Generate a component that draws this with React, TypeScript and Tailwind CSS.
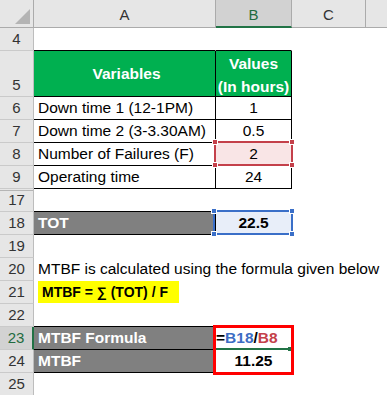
import React from 'react';

type RowProps = {
  num: string;
  h?: string;
  numCls?: string;
  children?: React.ReactNode;
};

// row header + cells
const Row = ({ num, h = 'h-[23px]', numCls = 'items-center bg-[#e6e6e6] text-[#333] border-r-[#bdbdbd]', children }: RowProps) => (
  <div className={`flex ${h}`}>
    <div className={`w-[34px] shrink-0 flex justify-center leading-[22px] text-[15px] border-r border-b border-b-[#cacaca] ${numCls}`}>
      {num}
    </div>
    {children}
  </div>
);

const colA = 'w-[182px] shrink-0 flex items-center pl-[4px] leading-[22px] border-r border-b whitespace-nowrap';
const colB = 'w-[76px] shrink-0 flex items-center justify-center leading-[22px] border-r border-b';
const none = 'border-transparent';
const line = 'border-black';

const Handles = ({ color }: { color: string }) => (
  <>
    <span className={`absolute -left-[4px] -top-[4px] w-[6px] h-[6px] border border-white ${color}`} />
    <span className={`absolute -right-[4px] -top-[4px] w-[6px] h-[6px] border border-white ${color}`} />
    <span className={`absolute -left-[4px] -bottom-[4px] w-[6px] h-[6px] border border-white ${color}`} />
    <span className={`absolute -right-[4px] -bottom-[4px] w-[6px] h-[6px] border border-white ${color}`} />
  </>
);

const App = () => {
  return (
    <div className="w-[387px] h-[395px] overflow-hidden bg-white text-black text-[15.5px] font-['Liberation_Sans',Arial,sans-serif]">
      {/* column headers */}
      <div className="flex h-[28px] text-[#333] text-[15px]">
        <div className="w-[34px] shrink-0 bg-[#e6e6e6] border-r border-b border-[#ababab]">
          <svg width="33" height="27" viewBox="0 0 33 27">
            <polygon points="30,9 30,24 15,24" fill="#b4b4b4" />
          </svg>
        </div>
        <div className="w-[182px] shrink-0 flex items-center justify-center pt-[4px] bg-[#e6e6e6] border-r border-b border-[#ababab]">A</div>
        <div className="w-[76px] shrink-0 flex items-center justify-center pt-[4px] bg-[#d2d2d2] text-[#1f6b40] border-r border-r-[#ababab] border-b-2 border-b-[#217346]">B</div>
        <div className="w-[74px] shrink-0 flex items-center justify-center pt-[4px] bg-[#e6e6e6] border-r border-b border-[#ababab]">C</div>
        <div className="flex-1 bg-[#e6e6e6] border-b border-[#ababab]" />
      </div>

      <Row num="4">
        <div className={`${colA} border-r-transparent border-b-black`} />
        <div className={`${colB} border-r-transparent border-b-black`} />
      </Row>

      <Row num="5" h="h-[46px]" numCls="items-end bg-[#e6e6e6] text-[#333] border-r-[#bdbdbd]">
        <div className={`${colA} ${line} justify-center pl-0 bg-[#00b050] text-white font-bold`}>Variables</div>
        <div className={`${colB} ${line} pt-[2px] bg-[#00b050] text-white font-bold text-center leading-[23px]`}>
          Values<br />(In hours)
        </div>
      </Row>

      <Row num="6">
        <div className={`${colA} ${line}`}>Down time 1 (12-1PM)</div>
        <div className={`${colB} ${line}`}>1</div>
      </Row>
      <Row num="7">
        <div className={`${colA} ${line}`}>Down time 2 (3-3.30AM)</div>
        <div className={`${colB} ${line}`}>0.5</div>
      </Row>
      <Row num="8">
        <div className={`${colA} ${line}`}>Number of Failures (F)</div>
        <div className={`${colB} ${line} relative bg-[#f9e5e6]`}>
          2
          <div className="absolute -left-[2px] -top-[2px] w-[79px] h-[25px] border-2 border-[#c4404a] pointer-events-none">
            <Handles color="bg-[#c4404a]" />
          </div>
        </div>
      </Row>
      <Row num="9">
        <div className={`${colA} ${line}`}>Operating time</div>
        <div className={`${colB} ${line}`}>24</div>
      </Row>

      <Row num="17" numCls="items-center bg-[#e6e6e6] text-[#333] border-r-[#bdbdbd] shadow-[inset_0_1px_0_#e6e6e6,inset_0_2px_0_#b5b5b5]">
        <div className={`${colA} border-r-transparent border-b-black`} />
        <div className={`${colB} border-r-transparent border-b-black`} />
      </Row>
      <Row num="18">
        <div className={`${colA} ${line} bg-[#808080] text-white font-bold`}>TOT</div>
        <div className={`${colB} ${line} relative bg-[#e8eef9] font-bold`}>
          22.5
          <div className="absolute -left-[3px] -top-[2px] w-[80px] h-[25px] border-2 border-[#3a6fc8] pointer-events-none">
            <Handles color="bg-[#3a6fc8]" />
          </div>
        </div>
      </Row>
      <Row num="19" />
      <Row num="20">
        <div className={`${colA} ${none}`}>MTBF is calculated using the formula given below</div>
      </Row>
      <Row num="21">
        <div className={`${colA} ${none} pl-0`}>
          <div className="w-[141px] h-full flex items-center pl-[4px] bg-[#ffff00] font-bold text-[14px]">MTBF = ∑ (TOT) / F</div>
        </div>
      </Row>
      <Row num="22">
        <div className={`${colA} border-r-transparent border-b-black`} />
        <div className={`${colB} border-r-transparent border-b-black`} />
      </Row>
      <Row num="23" numCls="items-center bg-[#d2d2d2] text-[#1f6b40] border-r-2 border-r-[#217346]">
        <div className={`${colA} ${line} bg-[#808080] text-white font-bold`}>MTBF Formula</div>
        <div className={`${colB} border-r-black border-b-transparent relative justify-start font-bold`}>
          <span>=</span>
          <span className="text-[#3c6dc4]">B18</span>
          <span>/</span>
          <span className="text-[#c4404a]">B8</span>
          <span className="absolute left-0 -bottom-[1px] w-[73px] h-[2px] bg-[#217346]" />
          <span className="absolute left-[72px] -bottom-[2px] w-[4px] h-[4px] bg-[#217346]" />
          <div className="absolute -left-[3px] -top-[2px] w-[81px] h-[50px] border-[3px] border-[#ff0000] pointer-events-none" />
        </div>
      </Row>
      <Row num="24">
        <div className={`${colA} ${line} bg-[#808080] text-white font-bold`}>MTBF</div>
        <div className={`${colB} ${line} font-bold`}>11.25</div>
      </Row>
      <Row num="25" />
    </div>
  );
};

export default App;
